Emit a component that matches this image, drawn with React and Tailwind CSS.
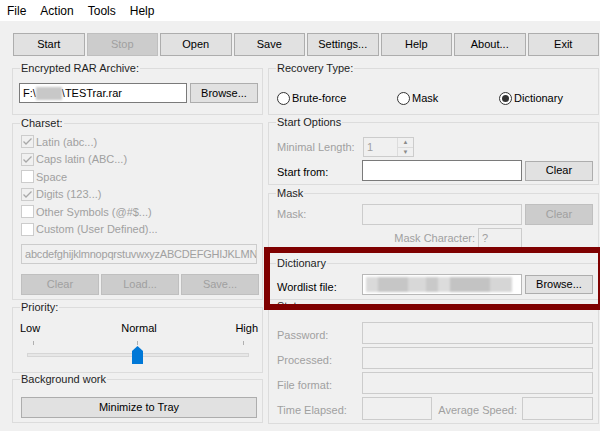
import React from "react";

const Button = ({ children, disabled, className = "" }) => (
  <button
    type="button"
    className={`flex items-center justify-center border leading-none ${
      disabled
        ? "bg-[#cccccc] border-[#bfbfbf] text-[#a0a0a0]"
        : "bg-[#e1e1e1] border-[#adadad] text-black"
    } ${className}`}
  >
    {children}
  </button>
);

const Group = ({ title, className = "", children }) => (
  <fieldset className={`border border-[#dcdcdc] ${className}`}>
    <legend className="ml-[7px] px-[1px] leading-[13px] text-[#1e1e1e]">
      {title}
    </legend>
    {children}
  </fieldset>
);

const Field = ({ disabled, className = "", children }) => (
  <div
    className={`flex items-center overflow-hidden whitespace-nowrap border px-[3px] ${
      disabled
        ? "bg-[#f0f0f0] border-[#cccccc] text-[#a0a0a0]"
        : "bg-white border-[#7a7a7a] text-black"
    } ${className}`}
  >
    {children}
  </div>
);

const Check = ({ checked, label }) => (
  <div className="flex h-[17.5px] items-center gap-[2px]">
    <span
      className={`flex h-[13px] w-[13px] items-center justify-center border border-[#cccccc] ${
        checked ? "bg-[#f0f0f0]" : "bg-white"
      }`}
    >
      {checked && (
        <svg width="11" height="11" viewBox="0 0 11 11">
          <polyline
            points="1.5,5.5 4,8 9.5,2.5"
            fill="none"
            stroke="#a8a8a8"
            strokeWidth="1.3"
          />
        </svg>
      )}
    </span>
    <span className="text-[#a0a0a0]">{label}</span>
  </div>
);

const Radio = ({ checked, label, className = "" }) => (
  <div className={`flex items-center gap-[2px] ${className}`}>
    <span className="flex h-[13px] w-[13px] items-center justify-center rounded-full border border-[#333333] bg-white">
      {checked && <span className="h-[7px] w-[7px] rounded-full bg-[#333333]" />}
    </span>
    <span>{label}</span>
  </div>
);

const StatusRow = ({ label }) => (
  <div className="flex h-[22px] items-center">
    <span className="mt-[5px] w-[85px] text-[#a0a0a0]">{label}</span>
    <Field disabled className="h-[22px] w-[231px]" />
  </div>
);

const menus = ["File", "Action", "Tools", "Help"];
const toolbar = [
  { label: "Start" },
  { label: "Stop", disabled: true },
  { label: "Open" },
  { label: "Save" },
  { label: "Settings..." },
  { label: "Help" },
  { label: "About..." },
  { label: "Exit" },
];
const charset = [
  { label: "Latin (abc...)", checked: true },
  { label: "Caps latin (ABC...)", checked: true },
  { label: "Space" },
  { label: "Digits (123...)", checked: true },
  { label: "Other Symbols (@#$...)" },
  { label: "Custom (User Defined)..." },
];

export default function App() {
  return (
    <div className="relative flex h-[431px] w-[600px] flex-col overflow-hidden bg-[#f0f0f0] font-['Liberation_Sans',Arial,sans-serif] text-[11px] text-black">
      {/* menu bar */}
      <div className="flex h-[21px] items-center bg-white text-[12px]">
        {menus.map((m) => (
          <span key={m} className="px-[7px]">
            {m}
          </span>
        ))}
      </div>

      {/* toolbar */}
      <div className="ml-[13px] mt-[12px] grid h-[23px] w-[586px] grid-cols-8 gap-[2px]">
        {toolbar.map((b) => (
          <Button key={b.label} disabled={b.disabled} className="h-[23px] text-[11px]">
            {b.label}
          </Button>
        ))}
      </div>

      <div className="mt-[6px] flex gap-[5px] pl-[12px]">
        {/* left column */}
        <div className="flex w-[251px] flex-col">
          <Group title="Encrypted RAR Archive:" className="h-[53px]">
            <div className="flex pl-[6px] pt-[8px]">
              <Field className="h-[20px] w-[168px]">
                <span>F:\</span>
                <span className="inline-block h-[13px] w-[26px] bg-[#c8c8c8] blur-[1px]" />
                <span>\TESTrar.rar</span>
              </Field>
              <Button className="ml-[3px] h-[20px] w-[68px]">Browse...</Button>
            </div>
          </Group>

          <Group title="Charset:" className="mt-[2px] h-[183px]">
            <div className="flex flex-col pl-[8px] pt-[3px]">
              {charset.map((c) => (
                <Check key={c.label} checked={c.checked} label={c.label} />
              ))}
              <Field disabled className="mt-[6px] h-[20px] w-[236px] tracking-[-0.2px]">
                abcdefghijklmnopqrstuvwxyzABCDEFGHIJKLMNOPQRSTUVWXYZ0123456789
              </Field>
              <div className="mt-[10px] flex gap-[2px]">
                <Button disabled className="h-[21px] w-[78px]">Clear</Button>
                <Button disabled className="h-[21px] w-[78px]">Load...</Button>
                <Button disabled className="h-[21px] w-[78px]">Save...</Button>
              </div>
            </div>
          </Group>

          <Group title="Priority:" className="mt-[1px] h-[72px]">
            <div className="flex flex-col pl-[7px] pr-[4px] pt-[8px]">
              <div className="grid h-[13px] grid-cols-3 leading-[13px]">
                <span className="text-left">Low</span>
                <span className="text-center">Normal</span>
                <span className="text-right">High</span>
              </div>
              <svg width="236" height="25" viewBox="0 0 236 25" className="mt-[5px]">
                <line x1="13.5" y1="1" x2="13.5" y2="5" stroke="#b0b0b0" />
                <line x1="117.5" y1="1" x2="117.5" y2="5" stroke="#b0b0b0" />
                <line x1="223.5" y1="1" x2="223.5" y2="5" stroke="#b0b0b0" />
                <rect x="7.5" y="13.5" width="221" height="3" fill="#e7e7e7" stroke="#d6d6d6" />
                <polygon points="117.5,6 123,11 123,24 112,24 112,11" fill="#0078d7" />
              </svg>
            </div>
          </Group>

          <Group title="Background work" className="h-[50px]">
            <div className="pl-[8px] pt-[11px]">
              <Button className="h-[21px] w-[236px]">Minimize to Tray</Button>
            </div>
          </Group>
        </div>

        {/* right column */}
        <div className="flex w-[331px] flex-col">
          <Group title="Recovery Type:" className="h-[53px]">
            <div className="flex pl-[8px] pt-[15px]">
              <Radio label="Brute-force" className="w-[120px]" />
              <Radio label="Mask" className="w-[102px]" />
              <Radio label="Dictionary" checked />
            </div>
          </Group>

          <Group title="Start Options" className="mt-[1px] h-[69px]">
            <div className="flex flex-col pl-[8px] pt-[8px]">
              <div className="flex h-[20px] items-center">
                <span className="w-[86px] text-[#a0a0a0]">Minimal Length:</span>
                <div className="flex h-[20px] w-[51px] border border-[#cccccc] bg-[#f0f0f0]">
                  <span className="flex-1 pl-[3px] leading-[18px] text-[#a0a0a0]">1</span>
                  <div className="flex w-[16px] flex-col border-l border-[#dcdcdc]">
                    <span className="flex flex-1 items-center justify-center border-b border-[#dcdcdc] text-[6px] leading-none text-[#8a8a8a]">▲</span>
                    <span className="flex flex-1 items-center justify-center text-[6px] leading-none text-[#8a8a8a]">▼</span>
                  </div>
                </div>
              </div>
              <div className="mt-[3px] flex h-[21px] items-center">
                <span className="mt-[4px] w-[85px]">Start from:</span>
                <Field className="h-[21px] w-[160px]" />
                <Button className="ml-[3px] h-[20px] w-[68px]">Clear</Button>
              </div>
            </div>
          </Group>

          <Group title="Mask" className="mt-[2px] h-[66px]">
            <div className="flex flex-col pl-[8px] pt-[4px]">
              <div className="flex h-[21px] items-center">
                <span className="w-[85px] text-[#a0a0a0]">Mask:</span>
                <Field disabled className="h-[21px] w-[160px]" />
                <Button disabled className="ml-[3px] h-[21px] w-[68px]">Clear</Button>
              </div>
              <div className="mt-[3px] flex h-[21px] items-center">
                <span className="w-[198px] text-right text-[#a0a0a0]">Mask Character:</span>
                <Field disabled className="ml-[3px] h-[21px] w-[44px]">?</Field>
              </div>
            </div>
          </Group>

          <Group title="Dictionary" className="mt-[4px] h-[43px]">
            <div className="flex items-center pl-[8px] pt-[3px]">
              <span className="mt-[6px] w-[85px]">Wordlist file:</span>
              <Field className="h-[21px] w-[160px] border-[#b8b8b8]">
                <div className="flex h-[15px] w-full blur-[1px]">
                  <span className="w-[12px] bg-[#dadada]" />
                  <span className="w-[30px] bg-[#c6c6c6]" />
                  <span className="w-[18px] bg-[#d8d8d8]" />
                  <span className="w-[12px] bg-[#c9c9c9]" />
                  <span className="w-[12px] bg-[#dcdcdc]" />
                  <span className="w-[40px] bg-[#c3c3c3]" />
                  <span className="w-[22px] bg-[#d6d6d6]" />
                </div>
              </Field>
              <Button className="ml-[3px] h-[19px] w-[68px]">Browse...</Button>
            </div>
          </Group>

          <Group title="Status" className="h-[124px]">
            <div className="flex flex-col gap-[3px] pl-[8px] pt-[9px]">
              <StatusRow label="Password:" />
              <StatusRow label="Processed:" />
              <StatusRow label="File format:" />
              <div className="flex h-[22px] items-center">
                <span className="mt-[5px] w-[85px] text-[#a0a0a0]">Time Elapsed:</span>
                <Field disabled className="h-[23px] w-[70px]" />
                <span className="mt-[5px] w-[90px] pr-[5px] text-right text-[#a0a0a0]">Average Speed:</span>
                <Field disabled className="h-[23px] w-[71px]" />
              </div>
            </div>
          </Group>
        </div>
      </div>

      {/* highlight frame */}
      <div className="pointer-events-none absolute left-[264px] top-[247px] h-[63px] w-[340px] border-[6px] border-[#7f0000]" />
    </div>
  );
}
